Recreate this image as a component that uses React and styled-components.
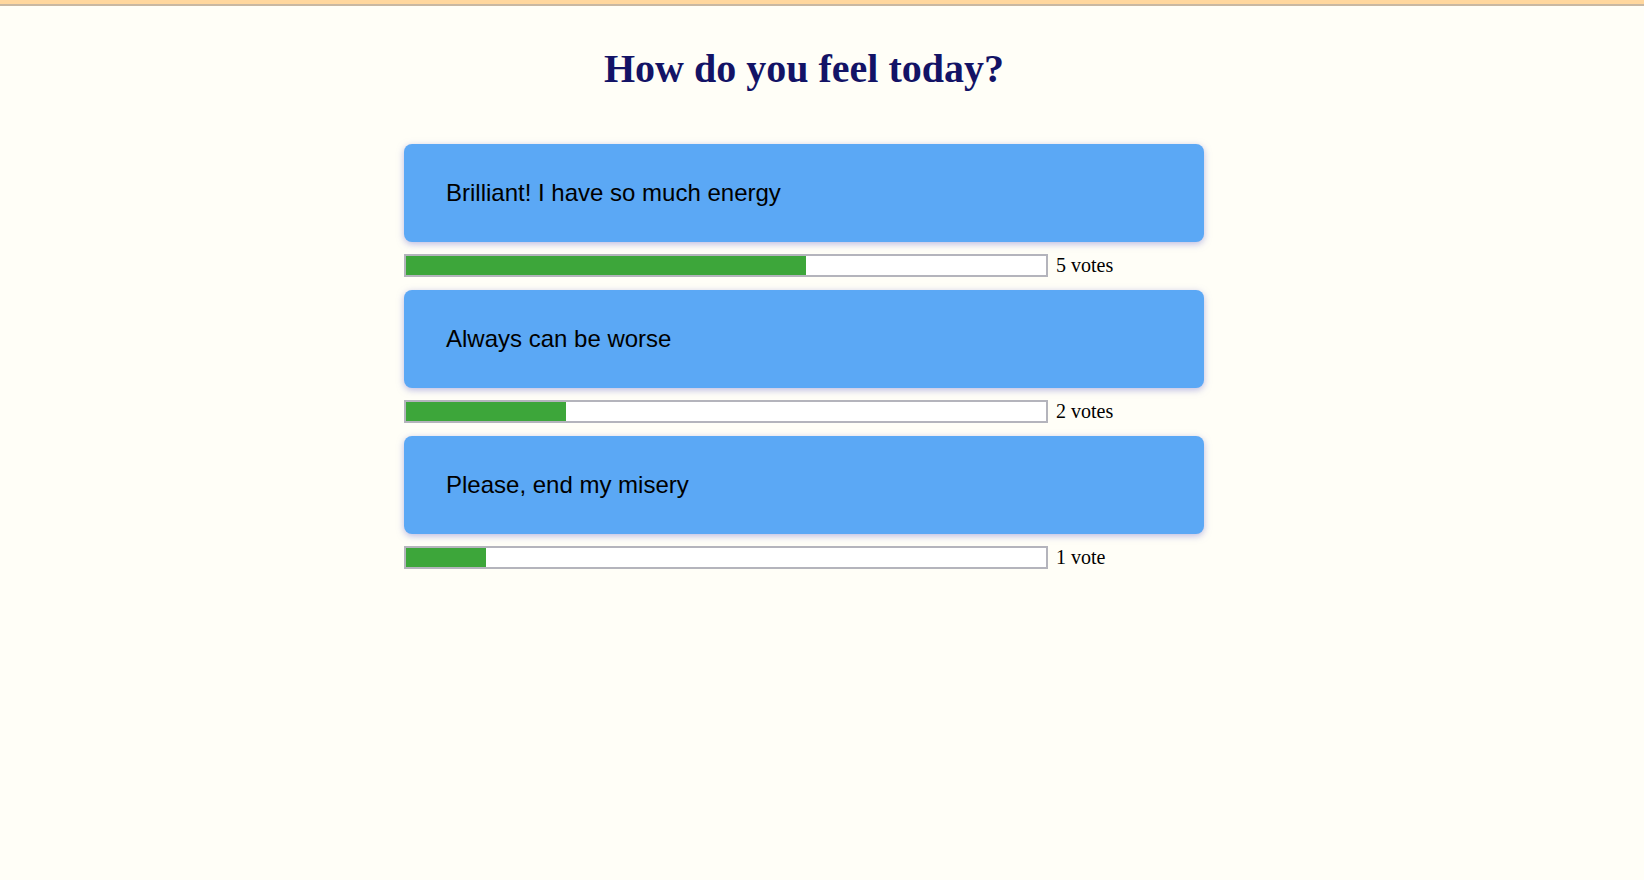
import styled, { createGlobalStyle } from "styled-components";

const GlobalStyle = createGlobalStyle`
  html, body {
    margin: 0;
    padding: 0;
    background: #fffef7;
  }
  body {
    font-family: "Liberation Serif", "Times New Roman", serif;
  }
`;

const answers = [
  { id: 1, text: "Brilliant! I have so much energy", votes: 5 },
  { id: 2, text: "Always can be worse", votes: 2 },
  { id: 3, text: "Please, end my misery", votes: 1 },
];

const TopLine = styled.div`
  height: 4px;
  background: #ffd79e;
  border-bottom: 2px solid #c9b8a2;
`;

const Page = styled.main`
  min-height: 874px;
  padding-right: 36px;
`;

const Title = styled.h1`
  margin: 0;
  padding-top: 40px;
  text-align: center;
  font-size: 40px;
  font-weight: 700;
  line-height: 46px;
  color: #131366;
`;

const Poll = styled.section`
  width: 800px;
  margin: 52px auto 0;
  display: flex;
  flex-direction: column;
`;

const Answer = styled.button`
  display: block;
  width: 100%;
  height: 98px;
  padding: 0 42px;
  border: none;
  border-radius: 8px;
  background: #5ba8f5;
  box-shadow: 0 2px 7px rgba(130, 130, 210, 0.55);
  text-align: left;
  font-family: "Liberation Sans", Arial, sans-serif;
  font-size: 24px;
  color: #000;
  cursor: pointer;
`;

const Result = styled.div`
  display: flex;
  align-items: center;
  gap: 8px;
  margin: 12px 0 13px;
`;

const Track = styled.div`
  width: 640px;
  height: 19px;
  border: 2px solid #b4b4bc;
  background: #fff;
`;

const Fill = styled.div`
  height: 100%;
  background: #3da63a;
`;

const Count = styled.span`
  font-size: 20px;
  color: #000;
`;

export default function App() {
  const total = answers.reduce((sum, a) => sum + a.votes, 0);
  return (
    <>
      <GlobalStyle />
      <TopLine />
      <Page>
        <Title>How do you feel today?</Title>
        <Poll>
          {answers.map((a) => (
            <div key={a.id}>
              <Answer>{a.text}</Answer>
              <Result>
                <Track>
                  <Fill style={{ width: `${(a.votes / total) * 100}%` }} />
                </Track>
                <Count>
                  {a.votes} {a.votes === 1 ? "vote" : "votes"}
                </Count>
              </Result>
            </div>
          ))}
        </Poll>
      </Page>
    </>
  );
}
